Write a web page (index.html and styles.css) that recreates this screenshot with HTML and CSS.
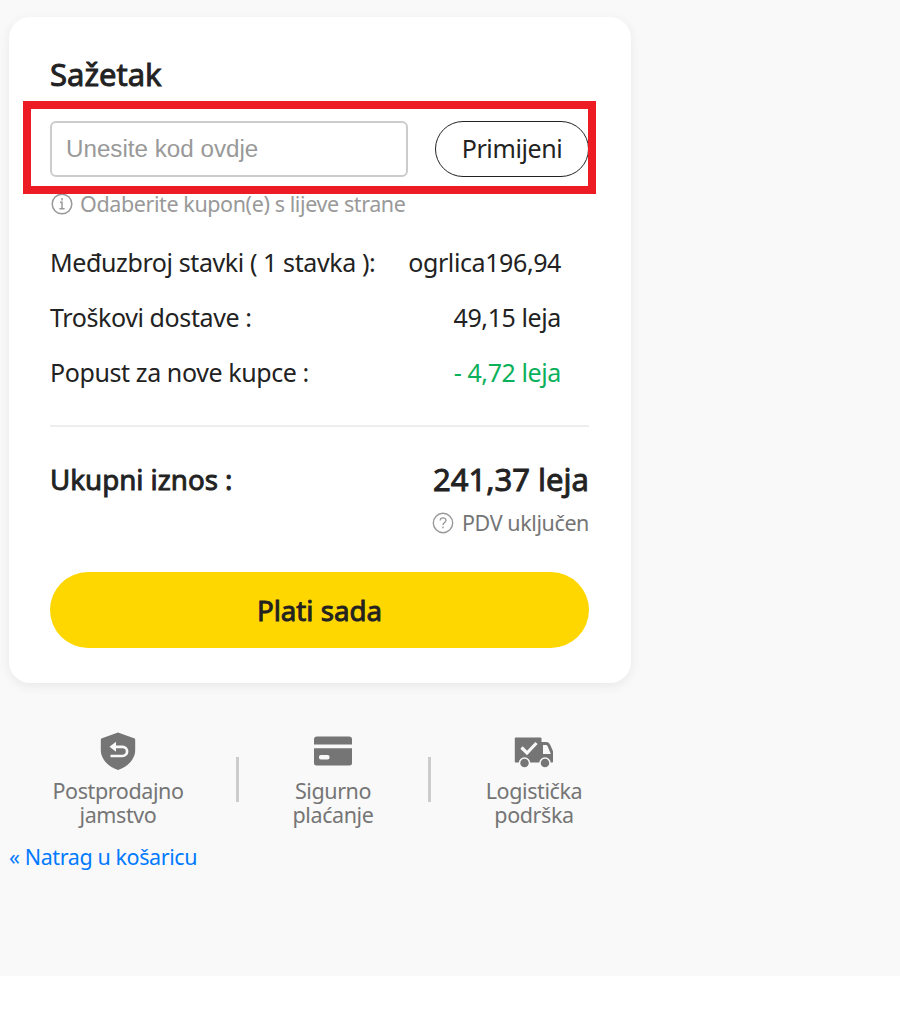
FILE: index.html
```html
<!DOCTYPE html>
<html lang="hr">
<head>
  <meta charset="UTF-8" />
  <meta name="viewport" content="width=device-width, initial-scale=1.0" />
  <title>Sažetak</title>
  <link rel="stylesheet" href="styles.css">
</head>
<body>
  <div class="page">
    <div class="summary-card">
      <h2 class="summary-title">Sažetak</h2>

      <div class="coupon">
        <input type="text" class="coupon-input" placeholder="Unesite kod ovdje" />
        <button class="coupon-btn">Primijeni</button>
        <div class="coupon-highlight"></div>
      </div>

      <div class="coupon-hint">
        <svg viewBox="0 0 22 22" width="22" height="22" fill="none" stroke="#999" stroke-width="1.5">
          <circle cx="11" cy="11" r="9.8" />
          <path d="M11 5v2.400M8.900 9.300H11v6.200M8.400 15.700h5.200" />
        </svg>
        <span>Odaberite kupon(e) s lijeve strane</span>
      </div>

      <div class="rows">
        <div class="row"><span>Međuzbroj stavki ( 1 stavka ):</span><span>ogrlica196,94</span></div>
        <div class="row"><span>Troškovi dostave :</span><span>49,15 leja</span></div>
        <div class="row"><span>Popust za nove kupce :</span><span class="discount">- 4,72 leja</span></div>
      </div>

      <div class="total">
        <span class="total-label">Ukupni iznos :</span>
        <span class="total-value">241,37 leja</span>
      </div>
      <div class="vat">
        <svg viewBox="0 0 22 22" width="22" height="22" fill="none" stroke="#999" stroke-width="1.4">
          <circle cx="11" cy="11" r="9.7" />
          <path d="M8.200 8.600c0-3.600 5.800-3.500 5.700-.2 0 2-2.900 2.200-2.900 4.600M11 14.600v1.700" />
        </svg>
        <span>PDV uključen</span>
      </div>

      <button class="pay-btn">Plati sada</button>
    </div>

    <div class="features">
      <div class="feature">
        <svg viewBox="0 0 40 40" width="40" height="40">
          <path fill="#757575" d="M20 1.500l16 5.800c1 .4 1.200 1 1.200 2V19c0 9-7 16.500-17.200 20C9.800 35.500 2.800 28 2.800 19V9.300c0-1 .3-1.600 1.200-2z" />
          <path fill="none" stroke="#f9f9f9" stroke-width="2.700" d="M15 15.800h9.500a4.600 4.600 0 0 1 0 9.200H12.500" />
          <path fill="#f9f9f9" d="M11.500 15.800l6.500-5v10z" />
        </svg>
        <span>Postprodajno<br>jamstvo</span>
      </div>
      <div class="divider"></div>
      <div class="feature">
        <svg viewBox="0 0 40 40" width="40" height="40" fill="#757575">
          <path d="M4 5.500h32a3 3 0 0 1 3 3v5.100H1V8.500a3 3 0 0 1 3-3z" />
          <path d="M1 17.300h38V32a2.500 2.500 0 0 1-2.500 2.500h-33A2.500 2.500 0 0 1 1 32z" />
          <rect x="6" y="24" width="10.500" height="4.600" rx="1.800" fill="#f9f9f9" />
        </svg>
        <span>Sigurno<br>plaćanje</span>
      </div>
      <div class="divider"></div>
      <div class="feature">
        <svg viewBox="0 0 40 40" width="40" height="40">
          <path fill="#757575" d="M2 6.500h24.500a1 1 0 0 1 1 1V11H32c2 0 3 .8 4 2.500l2.500 5.500c.3.700.5 1.300.5 2v9.500c0 .7-.4 1-1 1H1.800c-.6 0-1-.3-1-1V7.500c0-.7.500-1 1.200-1z" />
          <path fill="#f9f9f9" d="M29 14h3c.7 0 1.200.3 1.500 1l3.300 8H29z" />
          <path fill="none" stroke="#f9f9f9" stroke-width="3.200" d="M7.500 16.500l5.500 5.500L22.500 12" />
          <g fill="#757575" stroke="#f9f9f9" stroke-width="1.500">
            <circle cx="10.500" cy="32" r="5" />
            <circle cx="31" cy="32" r="5" />
          </g>
        </svg>
        <span>Logistička<br>podrška</span>
      </div>
    </div>

    <a class="back-link" href="#">« Natrag u košaricu</a>
  </div>
</body>
</html>
```
FILE: styles.css
```css
* {
  box-sizing: border-box;
}

body {
  margin: 0;
  background: #fff;
  color: #222;
  font-family: "Noto Sans", sans-serif;
  font-size: 25px;
  letter-spacing: -0.4px;
}

.page {
  height: 976px;
  padding: 17px 0 0 9px;
  background: #f9f9f9;
}

.summary-card {
  width: 622px;
  height: 666px;
  padding: 37px 42px 0 41px;
  background: #fff;
  border-radius: 21px;
  box-shadow: 0 3px 12px rgba(0, 0, 0, 0.07);
}

.summary-title {
  margin: 0;
  font-size: 31px;
  font-weight: 400;
  line-height: 41px;
  letter-spacing: 0;
  -webkit-text-stroke: 0.9px #222;
}

/* kupon */
.coupon {
  position: relative;
  display: flex;
  justify-content: space-between;
  margin-top: 26px;
}

.coupon-input {
  width: 358px;
  height: 56px;
  padding: 0 14px;
  border: 2px solid #ccc;
  border-radius: 6px;
  background: #fff;
  font-family: "Liberation Sans", sans-serif;
  font-size: 24.2px;
}

.coupon-input::placeholder {
  color: #999;
}

.coupon-btn {
  width: 154px;
  height: 56px;
  padding: 0 0 2px;
  border: 1.5px solid #222;
  border-radius: 28px;
  background: #fff;
  color: #222;
  font-family: inherit;
  font-size: 25px;
  letter-spacing: -0.4px;
}

.coupon-highlight {
  position: absolute;
  top: -20px;
  right: -7px;
  bottom: -17px;
  left: -27px;
  border: 8px solid #ed1c24;
  pointer-events: none;
}

.coupon-hint {
  display: flex;
  align-items: center;
  gap: 7px;
  height: 26px;
  margin-top: 14px;
  padding-left: 1px;
  color: #999;
  font-size: 21.5px;
}

.coupon-hint span {
  margin-top: -2px;
}

/* iznosi */
.rows {
  margin-top: 18px;
  padding: 0 28px 25px 0;
}

.row {
  display: flex;
  justify-content: space-between;
  line-height: 55px;
}

.discount {
  color: #0bb05b;
}

.total {
  display: flex;
  justify-content: space-between;
  padding-top: 24px;
  border-top: 2px solid #eee;
  line-height: 56px;
  letter-spacing: 0;
}

.total-label {
  font-size: 27.7px;
  -webkit-text-stroke: 0.9px #222;
}

.total-value {
  font-size: 31px;
  -webkit-text-stroke: 0.9px #222;
}

.vat {
  display: flex;
  align-items: center;
  justify-content: flex-end;
  gap: 8px;
  height: 30px;
  color: #757575;
  font-size: 21.5px;
}

.vat svg {
  margin-top: 2px;
}

.pay-btn {
  display: block;
  width: 100%;
  height: 76px;
  margin-top: 35px;
  border: none;
  border-radius: 38px;
  background: #ffd700;
  color: #222;
  font-family: inherit;
  font-size: 27.7px;
  -webkit-text-stroke: 0.9px #222;
}

.features {
  display: grid;
  grid-template-columns: 218px 20px 172px 20px 190px;
  margin-top: 48px;
  color: #757575;
  font-size: 21.5px;
  line-height: 24px;
  text-align: center;
}

.feature svg {
  display: block;
  margin: 0 auto 8px;
}

.divider {
  width: 3px;
  height: 45px;
  margin: 26px auto 0;
  background: #ccc;
}

.back-link {
  display: block;
  margin-top: 15px;
  color: #007aff;
  font-size: 21.5px;
  line-height: 29px;
  text-decoration: none;
}
```
